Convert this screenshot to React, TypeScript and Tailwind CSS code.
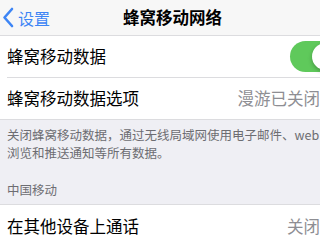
const font = { fontFamily: '"Noto Sans CJK SC", "Noto Sans", sans-serif' };

const Toggle = () => (
  <div className="relative h-[31px] w-[51px] shrink-0 rounded-full bg-[#5fc95b]">
    <div className="absolute right-[2px] top-[2px] h-[27px] w-[27px] rounded-full bg-white shadow-[0_2px_4px_rgba(0,0,0,0.25)]" />
  </div>
);

export default function App() {
  return (
    <div className="h-[240px] w-[320px] overflow-hidden bg-[#efeff4]" style={font}>
      {/* Nav bar */}
      <div className="relative flex h-[36px] items-center border-b border-[#dcdcdf] bg-[#f7f7f7]">
        <div className="flex items-center pl-[2px] text-[16px]">
          <svg width="12" height="21" viewBox="0 0 12 21" fill="none">
            <path d="M10 2 L2.5 10.5 L10 19" stroke="#3d85f5" strokeWidth="2.6" strokeLinecap="round" strokeLinejoin="round" />
          </svg>
          <span className="ml-[4px] text-[#3d85f5]">设置</span>
        </div>
        <div className="absolute left-[123px] text-[16.5px] font-semibold text-black">蜂窝移动网络</div>
      </div>

      {/* Group 1 */}
      <div className="bg-white">
        <div className="flex h-[41px] items-center justify-between pl-[7px]">
          <span className="text-[16.5px] text-black">蜂窝移动数据</span>
          <div className="mr-[-21px]">
            <Toggle />
          </div>
        </div>
        <div className="ml-[7px] h-px bg-[#dcdcdf]" />
        <div className="flex h-[41px] items-center justify-between pl-[7px]">
          <span className="text-[16.5px] text-black">蜂窝移动数据选项</span>
          <span className="whitespace-nowrap text-[16.5px] text-[#8e8e93]">漫游已关闭</span>
        </div>
      </div>
      <div className="h-px bg-[#dcdcdf]" />

      {/* Footer */}
      <div className="px-[7px] pt-[6px] text-[12.5px] leading-[18px] text-[#6d6d72]">
        <p className="whitespace-nowrap">关闭蜂窝移动数据，通过无线局域网使用电子邮件、web</p>
        <p>浏览和推送通知等所有数据。</p>
      </div>
      <div className="px-[7px] pt-[19px] pb-[5px] text-[12.5px] leading-[18px] text-[#6d6d72]">中国移动</div>

      {/* Group 2 */}
      <div className="border-t border-[#dcdcdf] bg-white">
        <div className="flex h-[43px] items-center justify-between pl-[7px]">
          <span className="text-[16.5px] text-black">在其他设备上通话</span>
          <span className="text-[16.5px] text-[#8e8e93]">关闭</span>
        </div>
      </div>
    </div>
  );
}
